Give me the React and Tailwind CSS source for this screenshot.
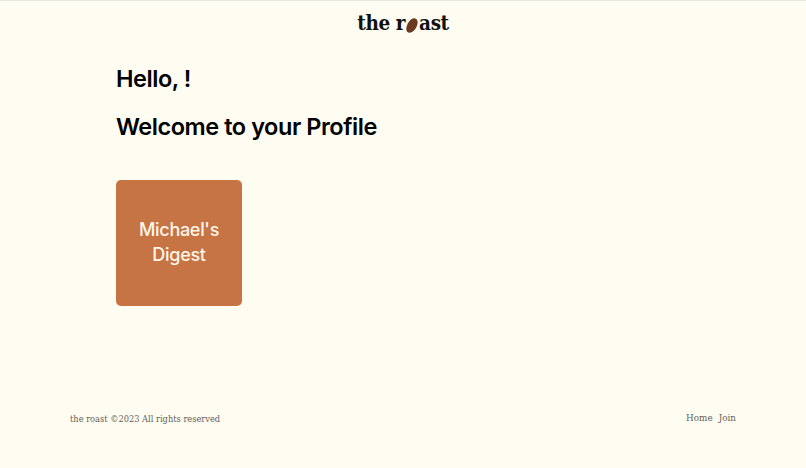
import React from 'react';

const serif = { fontFamily: '"DejaVu Serif", serif' };

function Bean() {
    return (
        <svg width="12" height="15" viewBox="0 0 12 15" className="mx-[1px] mt-[3px]">
            <path d="M9 0.4C11.4 0.9 12.3 3.6 11.2 7C10 11 7 14.7 3.6 14.7C0.9 14.7 -0.3 12.2 0.6 8.8C1.8 4.2 5.4 -0.4 9 0.4Z" fill="#6b3a1e" />
        </svg>
    );
}

export default function App() {
    return (
        <div className="w-full h-[468px] flex flex-col bg-[#fffcf2] text-black border-t border-[#e8e6df]" style={{ fontFamily: 'Inter, sans-serif' }}>
            <header className="flex justify-center items-center h-[45px] shrink-0">
                <div className="flex items-center text-[20.5px] font-bold leading-none tracking-[-0.4px] text-[#111] [font-stretch:condensed]" style={serif}>
                    <span>the r</span>
                    <Bean />
                    <span>ast</span>
                </div>
            </header>

            <main className="flex-1 pl-[116px]">
                <h1 className="text-[23.5px] font-semibold leading-[30px] tracking-[-0.45px] mt-[18px]">Hello, !</h1>
                <h2 className="text-[23.5px] font-semibold leading-[30px] tracking-[-0.45px] mt-[17px] pt-[1px]">Welcome to your Profile</h2>
                <div className="w-[126px] h-[126px] mt-[38px] rounded-[5px] bg-[#c77445] flex items-center justify-center text-center text-[#fff6e8] text-[18px] font-medium leading-[25px] tracking-[-0.3px]">
                    <span className="-mt-[2px]">Michael's<br />Digest</span>
                </div>
            </main>

            <footer className="flex justify-between items-center px-[70px] pb-[42px] text-[9.2px] text-[#5f5f58] [font-stretch:condensed]" style={serif}>
                <span>the roast ©2023 All rights reserved</span>
                <nav className="flex gap-[6px] text-[9.8px]">
                    <span>Home</span>
                    <span>Join</span>
                </nav>
            </footer>
        </div>
    );
}
